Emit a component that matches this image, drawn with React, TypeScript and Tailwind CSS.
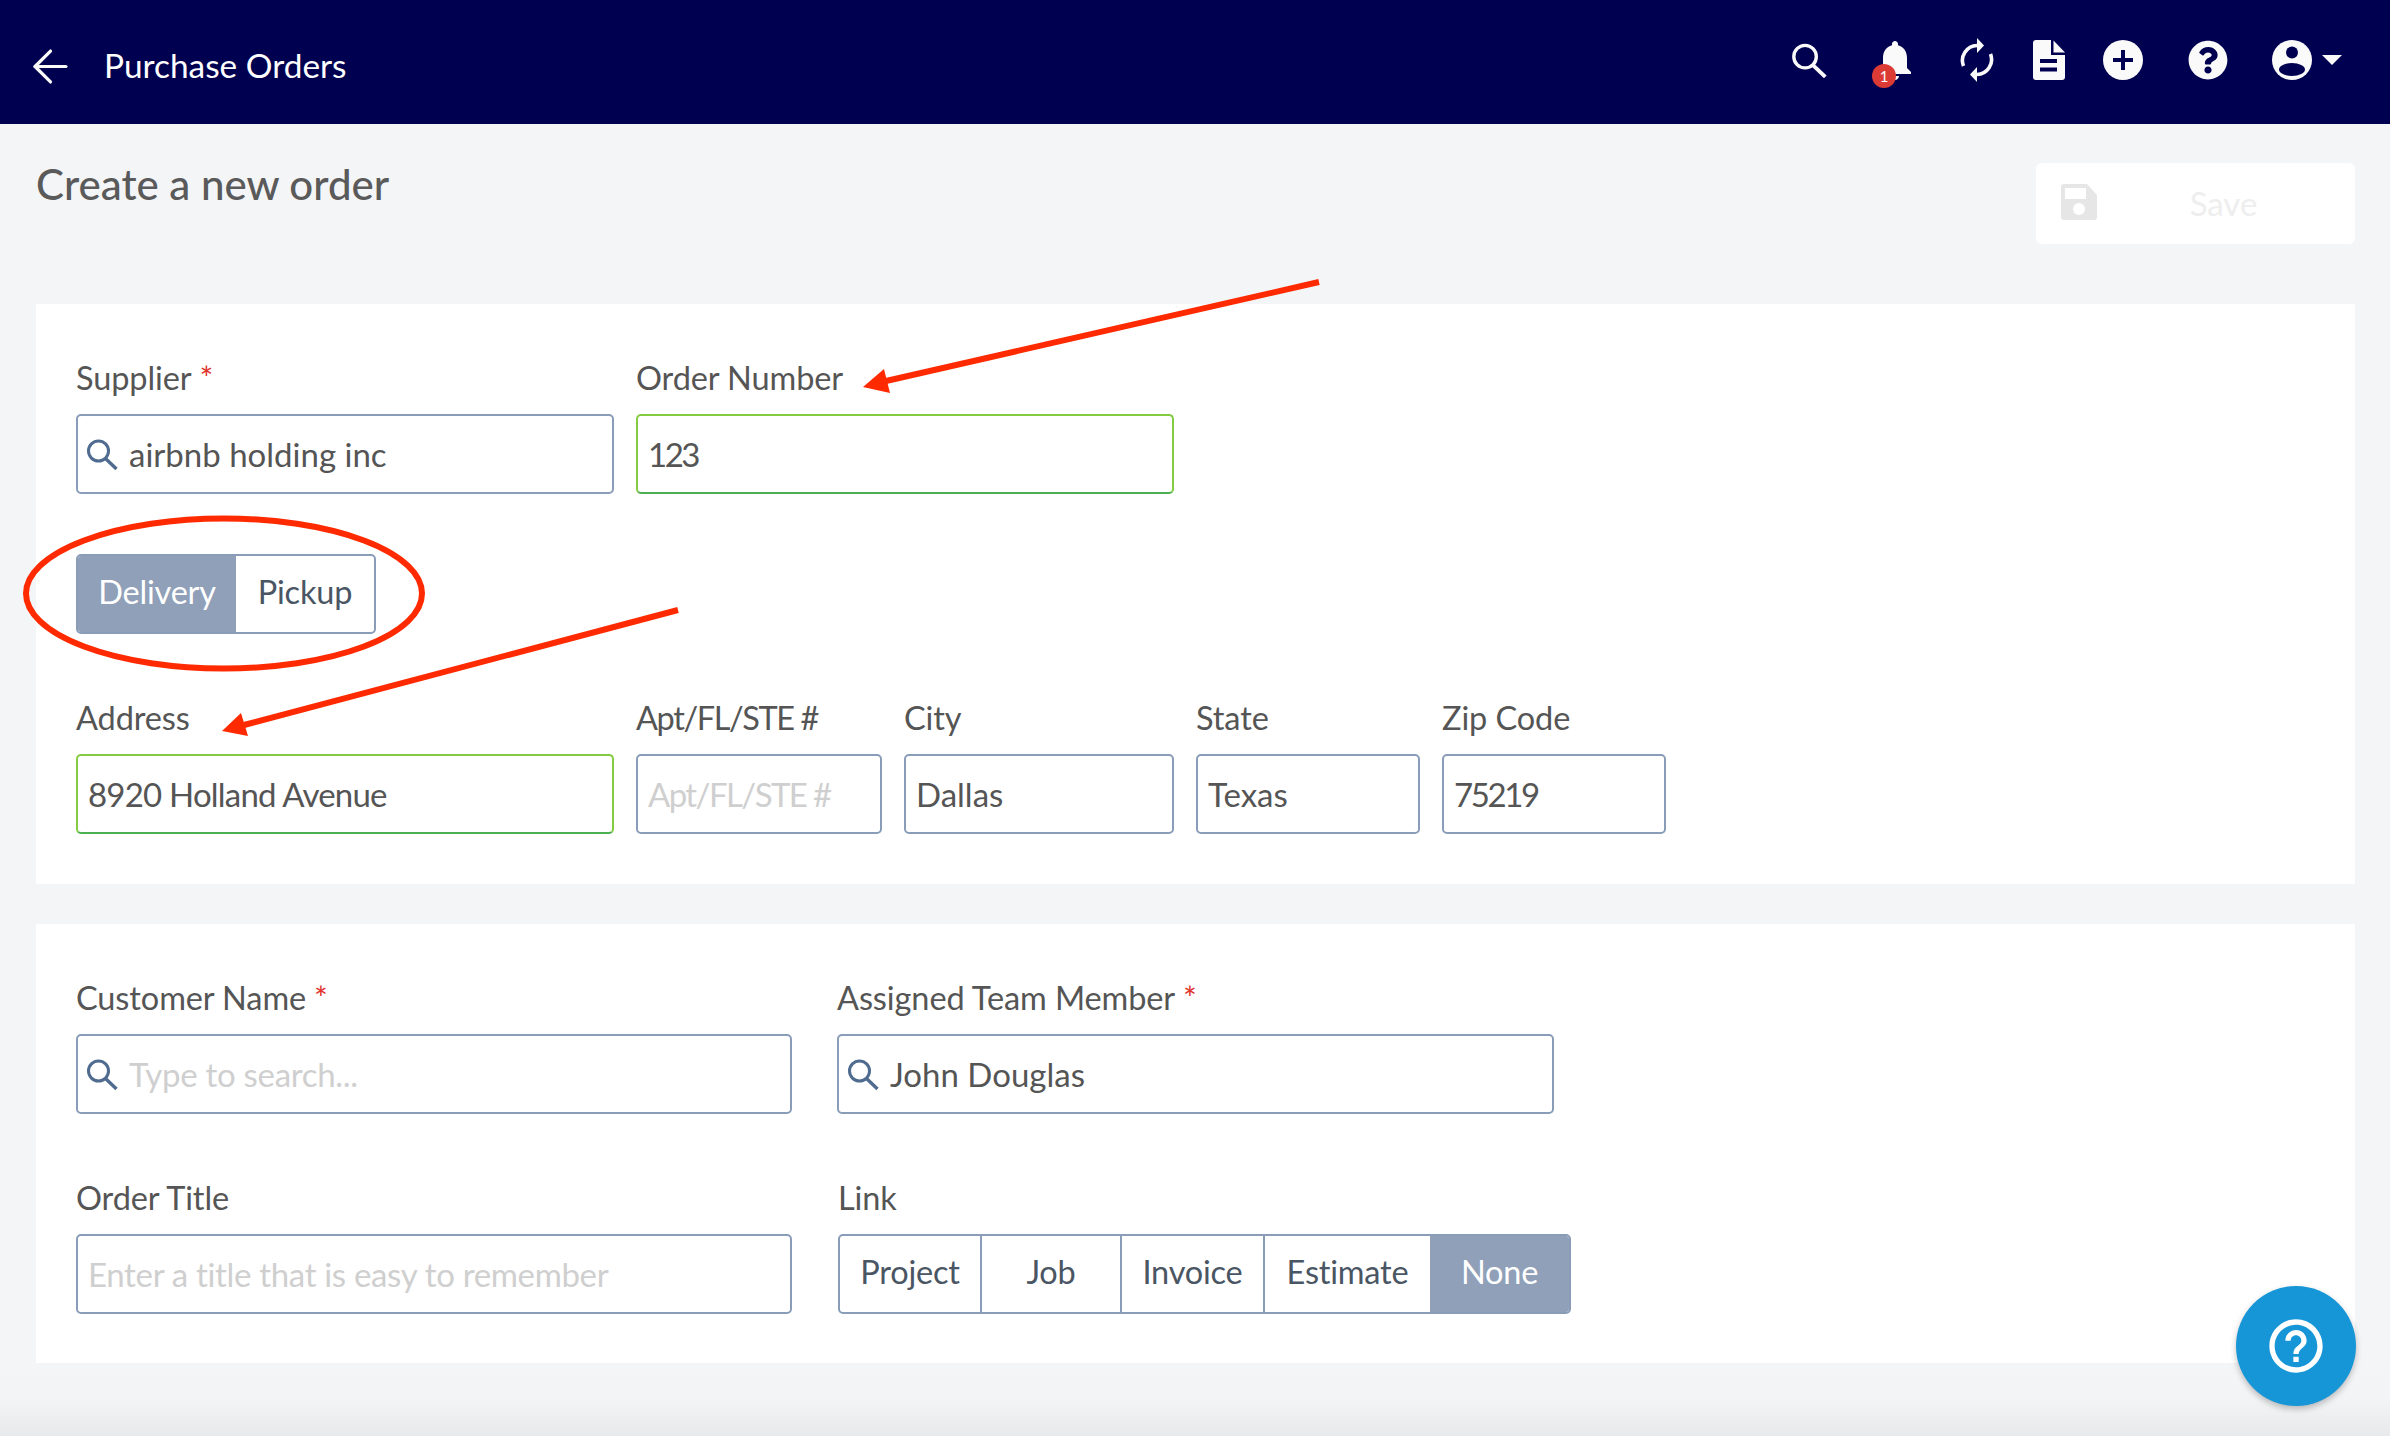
import React from 'react';
import { ArrowLeft } from 'lucide-react';
import { FaQuestionCircle } from 'react-icons/fa';
import { MdHelpOutline, MdNotifications } from 'react-icons/md';

const font = { fontFamily: '"Lato", "Noto Sans", sans-serif' };

const NAVY = '#000050';

const Label = ({ text, required, tight }: { text: string; required?: boolean; tight?: boolean }) => (
    <div
        className={`h-[40px] mb-[16px] text-[32.5px] leading-[40px] text-[#555555] whitespace-nowrap ${
            tight ? 'tracking-[-1.4px]' : 'tracking-[-0.1px]'
        }`}
    >
        {text}
        {required && <span className="ml-[8px] text-[#e0342c]">*</span>}
    </div>
);

const SearchGlyph = ({ size, className }: { size: number; className?: string }) => (
    <svg width={size} height={size} viewBox="0 0 32 32" fill="none" stroke="currentColor" className={className}>
        <circle cx="12.5" cy="13" r="10" strokeWidth="3" />
        <path d="M19.5 20.5 L30.5 31" strokeWidth="3.4" />
    </svg>
);

const TextInput = ({
    value,
    placeholder,
    green,
    search,
    tracking = '',
}: {
    value?: string;
    placeholder?: string;
    green?: boolean;
    search?: boolean;
    tracking?: string;
}) => (
    <div className="relative">
        {search && <SearchGlyph size={32} className="absolute left-[10px] top-[24px] text-[#4f6b8f]" />}
        <input
            readOnly
            value={value ?? ''}
            placeholder={placeholder}
            className={`block w-full h-[80px] rounded-[5px] border-2 bg-white text-[33px] text-[#555555] placeholder:text-[#cfcfcf] outline-none ${tracking} ${
                green ? 'border-[#84cc3f] border-b-[#4caf50]' : 'border-[#8a9db8]'
            } ${search ? 'pl-[51px] pr-[10px]' : 'px-[10px]'}`}
        />
    </div>
);

const Segmented = ({ items }: { items: { label: string; width: string; active?: boolean }[] }) => (
    <div className="flex w-fit h-[80px] rounded-[5px] border-2 border-[#8a9db8] overflow-hidden bg-white text-[32.5px] tracking-[-0.2px]">
        {items.map((item, i) => (
            <div
                key={item.label}
                className={`flex items-center justify-center pb-[3px] ${item.width} ${
                    item.active ? 'bg-[#8fa0b8] text-white' : 'text-[#4a5663]'
                } ${i > 0 && !item.active && !items[i - 1].active ? 'border-l-2 border-[#8a9db8]' : ''}`}
            >
                {item.label}
            </div>
        ))}
    </div>
);

const SyncIcon = () => (
    <svg width="34" height="44" viewBox="0 0 34 44" fill="none" className="shrink-0">
        <path d="M3.5 28 A15 15 0 0 1 17 7.5" stroke="#fafafa" strokeWidth="3.6" />
        <path d="M30.5 16 A15 15 0 0 1 17 36.5" stroke="#fafafa" strokeWidth="3.6" />
        <path d="M17 0 L24 7.5 L17 15 Z" fill="#fafafa" />
        <path d="M17 29 L10 36.5 L17 44 Z" fill="#fafafa" />
    </svg>
);

const DocIcon = () => (
    <svg width="32" height="40" viewBox="0 0 32 40" className="shrink-0">
        <path d="M3 0 H18 V15 H32 V37 a3 3 0 0 1 -3 3 H3 a3 3 0 0 1 -3 -3 V3 a3 3 0 0 1 3 -3 Z" fill="#fafafa" />
        <path d="M20.5 0.5 L32 12.5 H20.5 Z" fill="#fafafa" />
        <rect x="7" y="19" width="17" height="4" fill={NAVY} />
        <rect x="7" y="27.5" width="17" height="4" fill={NAVY} />
    </svg>
);

const PlusIcon = () => (
    <svg width="40" height="40" viewBox="0 0 40 40" className="shrink-0">
        <circle cx="20" cy="20" r="20" fill="#fafafa" />
        <rect x="10" y="18" width="20" height="4" fill={NAVY} />
        <rect x="18" y="10" width="4" height="20" fill={NAVY} />
    </svg>
);

const UserIcon = () => (
    <svg width="40" height="40" viewBox="0 0 40 40" className="shrink-0">
        <circle cx="20" cy="20" r="20" fill="#fafafa" />
        <circle cx="20" cy="12.5" r="6" fill={NAVY} />
        <ellipse cx="20" cy="29.5" rx="13" ry="6.5" fill={NAVY} />
    </svg>
);

const SaveIcon = () => (
    <svg width="36" height="36" viewBox="0 0 36 36" className="absolute left-[25px] top-[21px]">
        <path d="M3 0 H26 L36 11 V33 a3 3 0 0 1 -3 3 H3 a3 3 0 0 1 -3 -3 V3 a3 3 0 0 1 3 -3 Z" fill="#e6e6e6" />
        <rect x="4" y="4" width="21" height="11" fill="#ffffff" />
        <circle cx="18" cy="25" r="6" fill="#ffffff" />
    </svg>
);

const App = () => {
    return (
        <div className="relative w-full h-[1436px] overflow-hidden bg-[#f4f5f7] flex flex-col" style={font}>
            <header className="h-[124px] shrink-0 bg-[#000050] flex items-center pl-[24px] pr-[48px] text-[#fafafa]">
                <ArrowLeft size={53} strokeWidth={1.45} className="mt-[8px]" />
                <span className="ml-[27px] mt-[6px] text-[33.4px] text-white">Purchase Orders</span>
                <div className="ml-auto mb-[4px] flex items-center">
                    <SearchGlyph size={36} />
                    <div className="relative ml-[44px]">
                        <MdNotifications size={48} />
                        <span className="absolute left-[1px] top-[28px] w-[24px] h-[24px] rounded-full bg-[#db3b34] text-white text-[15px] leading-[24px] text-center">
                            1
                        </span>
                    </div>
                    <div className="ml-[41px]">
                        <SyncIcon />
                    </div>
                    <div className="ml-[39px]">
                        <DocIcon />
                    </div>
                    <div className="ml-[38px]">
                        <PlusIcon />
                    </div>
                    <FaQuestionCircle size={40} className="ml-[45px]" />
                    <div className="ml-[44px]">
                        <UserIcon />
                    </div>
                    <svg width="20" height="10" viewBox="0 0 20 10" className="ml-[10px] shrink-0">
                        <path d="M0 0 H20 L10 10 Z" fill="#fafafa" />
                    </svg>
                </div>
            </header>

            <main className="flex-1 pl-[36px] pr-[35px]">
                <div className="pt-[39px] flex justify-between items-start">
                    <h1 className="text-[42px] leading-[42px] text-[#5a5a5a] font-medium">Create a new order</h1>
                    <div className="relative w-[319px] h-[81px] rounded-[6px] bg-white flex items-center justify-center">
                        <SaveIcon />
                        <span className="ml-[56px] text-[33px] text-[#eeeeee]">Save</span>
                    </div>
                </div>

                <section className="mt-[60px] h-[580px] bg-white px-[40px] pt-[54px]">
                    <div className="flex gap-[22px]">
                        <div className="w-[538px]">
                            <Label text="Supplier" required />
                            <TextInput value="airbnb holding inc" search />
                        </div>
                        <div className="w-[538px]">
                            <Label text="Order Number" />
                            <TextInput value="123" green tracking="tracking-[-2.5px]" />
                        </div>
                    </div>

                    <div className="mt-[60px]">
                        <Segmented
                            items={[
                                { label: 'Delivery', width: 'w-[158px]', active: true },
                                { label: 'Pickup', width: 'w-[138px]' },
                            ]}
                        />
                    </div>

                    <div className="mt-[64px] flex gap-[22px]">
                        <div className="w-[538px]">
                            <Label text="Address" />
                            <TextInput value="8920 Holland Avenue" green tracking="tracking-[-0.8px]" />
                        </div>
                        <div className="w-[246px]">
                            <Label text="Apt/FL/STE #" tight />
                            <TextInput placeholder="Apt/FL/STE #" tracking="tracking-[-1.6px]" />
                        </div>
                        <div className="w-[270px]">
                            <Label text="City" />
                            <TextInput value="Dallas" />
                        </div>
                        <div className="w-[224px]">
                            <Label text="State" />
                            <TextInput value="Texas" />
                        </div>
                        <div className="w-[224px]">
                            <Label text="Zip Code" />
                            <TextInput value="75219" tracking="tracking-[-2.4px]" />
                        </div>
                    </div>
                </section>

                <section className="mt-[40px] h-[439px] bg-white px-[40px] pt-[54px]">
                    <div className="flex gap-[45px]">
                        <div className="w-[716px]">
                            <Label text="Customer Name" required />
                            <TextInput placeholder="Type to search..." search tracking="tracking-[-0.3px]" />
                        </div>
                        <div className="w-[717px]">
                            <Label text="Assigned Team Member" required />
                            <TextInput value="John Douglas" search />
                        </div>
                    </div>

                    <div className="mt-[64px] flex gap-[46px]">
                        <div className="w-[716px]">
                            <Label text="Order Title" />
                            <TextInput placeholder="Enter a title that is easy to remember" tracking="tracking-[-0.33px]" />
                        </div>
                        <div>
                            <Label text="Link" />
                            <Segmented
                                items={[
                                    { label: 'Project', width: 'w-[140px]' },
                                    { label: 'Job', width: 'w-[140px]' },
                                    { label: 'Invoice', width: 'w-[143px]' },
                                    { label: 'Estimate', width: 'w-[167px]' },
                                    { label: 'None', width: 'w-[139px]', active: true },
                                ]}
                            />
                        </div>
                    </div>
                </section>
            </main>

            <div className="h-[73px] shrink-0 bg-gradient-to-b from-[#f4f5f7] via-[#f3f4f6] to-[#e8e9eb]" />

            {/* red annotations drawn over the form */}
            <svg className="absolute left-0 top-0 pointer-events-none" width="2390" height="1436" fill="none">
                <ellipse cx="224" cy="593.5" rx="198" ry="75" stroke="#ff2a00" strokeWidth="6" />
                <path d="M1319 282 L886 381" stroke="#ff2a00" strokeWidth="6" />
                <path d="M863 387 L884 369 L890 393 Z" fill="#ff2a00" />
                <path d="M678 610 L244 725" stroke="#ff2a00" strokeWidth="6" />
                <path d="M222 731 L241 713 L248 736 Z" fill="#ff2a00" />
            </svg>

            <button className="absolute right-[34px] bottom-[30px] w-[120px] h-[120px] rounded-full bg-[#1696d6] shadow-[0_3px_6px_rgba(0,0,0,0.25)] flex items-center justify-center text-white">
                <MdHelpOutline size={64} />
            </button>
        </div>
    );
};

export default App;
